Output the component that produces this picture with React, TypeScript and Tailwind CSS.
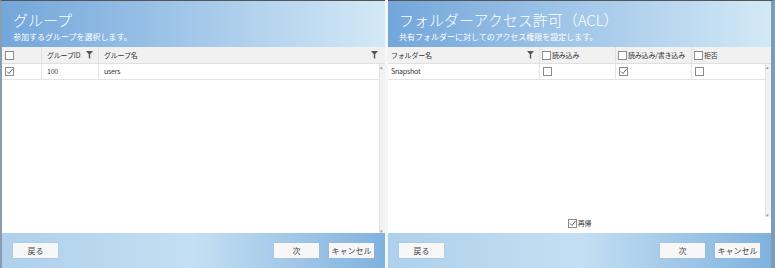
import React from "react";

const jp = { fontFamily: '"Noto Sans CJK JP", "Noto Sans", sans-serif' };

function Box({ checked = false }: { checked?: boolean }) {
  return (
    <span className="inline-flex h-[9px] w-[9px] shrink-0 items-center justify-center border border-[#8c8c8c] bg-white align-middle">
      {checked && (
        <svg width="7" height="7" viewBox="0 0 7 7">
          <path d="M1 3.5 L3 5.5 L6.5 1" fill="none" stroke="#555" strokeWidth="0.9" />
        </svg>
      )}
    </span>
  );
}

function Funnel() {
  return (
    <svg width="7" height="8" viewBox="0 0 7 8" className="shrink-0">
      <path d="M0 0 H7 L4.2 3.2 V8 L2.8 7 V3.2 Z" fill="#555" />
    </svg>
  );
}

function Btn({ label }: { label: string }) {
  return (
    <div className="flex h-[15px] w-[45px] items-center justify-center bg-[#f7f7f7] text-[8px] text-[#444] shadow-[0_0_1px_#9ab]">
      {label}
    </div>
  );
}

function Header({ title, sub }: { title: string; sub: string }) {
  return (
    <div className="flex h-[46px] shrink-0 flex-col justify-end bg-gradient-to-r from-[#73a6db] to-[#d3e9f6] px-[11px] pb-[5px] text-white">
      <div className="text-[15px] leading-[22px] font-light whitespace-nowrap">{title}</div>
      <div className="text-[8px] leading-[11px] whitespace-nowrap">{sub}</div>
    </div>
  );
}

function Footer({ left, right }: { left: string; right: string[] }) {
  return (
    <div className="flex h-[35px] shrink-0 items-center justify-between bg-gradient-to-r from-[#aed0ec] via-[#c4dff2] to-[#80b2de] px-[11px]">
      <Btn label={left} />
      <div className="flex gap-[10px]">
        {right.map((r) => (
          <Btn key={r} label={r} />
        ))}
      </div>
    </div>
  );
}

function Scroll() {
  return (
    <div className="flex w-[6px] shrink-0 flex-col justify-between border-l border-[#e2e2e2] bg-[#f2f2f2] text-[5px] leading-[5px] text-[#999]">
      <span>▴</span>
      <span>▾</span>
    </div>
  );
}

export default function App() {
  return (
    <div className="flex h-[268px] w-[775px] bg-white text-[#333]" style={jp}>
      <div className="flex w-[385px] flex-col border-t border-l-2 border-t-[#555] border-l-[#8a9cb0]">
        <Header title="グループ" sub="参加するグループを選択します。" />
        <div className="flex min-h-0 flex-1 flex-col text-[7px] tracking-[-0.2px] whitespace-nowrap">
          <div className="flex h-[17px] shrink-0 border-b border-[#e0e0e0] bg-[#f1f1f1]">
            <div className="flex w-[40px] items-center border-r border-[#e0e0e0] pl-[3px]">
              <Box />
            </div>
            <div className="flex w-[57px] items-center justify-between border-r border-[#e0e0e0] px-[5px]">
              <span>グループID</span>
              <Funnel />
            </div>
            <div className="flex flex-1 items-center justify-between pr-[7px] pl-[5px]">
              <span>グループ名</span>
              <Funnel />
            </div>
          </div>
          <div className="flex min-h-0 flex-1">
            <div className="flex-1">
              <div className="flex h-[16px] border-b border-[#e4e4e4]">
                <div className="flex w-[40px] items-center border-r border-[#e4e4e4] pl-[3px]">
                  <Box checked />
                </div>
                <div className="flex w-[57px] items-center border-r border-[#e4e4e4] px-[5px]">100</div>
                <div className="flex flex-1 items-center px-[5px]">users</div>
              </div>
            </div>
            <Scroll />
          </div>
        </div>
        <Footer left="戻る" right={["次", "キャンセル"]} />
      </div>
      <div className="w-[3px] bg-[#f4f7fa]" />
      <div className="flex flex-1 flex-col border-t border-r-4 border-t-[#555] border-r-[#7d9cb8]">
        <Header title="フォルダーアクセス許可（ACL）" sub="共有フォルダーに対してのアクセス権限を設定します。" />
        <div className="flex min-h-0 flex-1 flex-col text-[7px] tracking-[-0.2px] whitespace-nowrap">
          <div className="flex h-[17px] shrink-0 border-b border-[#e0e0e0] bg-[#f1f1f1]">
            <div className="flex w-[152px] items-center justify-between border-r border-[#e0e0e0] pr-[5px] pl-[3px]">
              <span>フォルダー名</span>
              <Funnel />
            </div>
            <div className="flex w-[76px] items-center gap-[1px] border-r border-[#e0e0e0] pl-[2px]">
              <Box />
              <span>読み込み</span>
            </div>
            <div className="flex w-[76px] items-center gap-[1px] border-r border-[#e0e0e0] pl-[2px]">
              <Box />
              <span>読み込み/書き込み</span>
            </div>
            <div className="flex flex-1 items-center gap-[1px] pl-[2px]">
              <Box />
              <span>拒否</span>
            </div>
          </div>
          <div className="flex min-h-0 flex-1">
            <div className="flex flex-1 flex-col">
              <div className="flex h-[16px] border-b border-[#e4e4e4]">
                <div className="flex w-[152px] items-center border-r border-[#e4e4e4] pl-[3px]">Snapshot</div>
                <div className="flex w-[76px] items-center border-r border-[#e4e4e4] pl-[3px]">
                  <Box />
                </div>
                <div className="flex w-[76px] items-center border-r border-[#e4e4e4] pl-[3px]">
                  <Box checked />
                </div>
                <div className="flex flex-1 items-center pl-[3px]">
                  <Box />
                </div>
              </div>
            </div>
            <Scroll />
          </div>
          <div className="flex h-[16px] shrink-0 items-center justify-center gap-[1px] pb-[3px]">
            <Box checked />
            <span>再帰</span>
          </div>
        </div>
        <Footer left="戻る" right={["次", "キャンセル"]} />
      </div>
    </div>
  );
}
